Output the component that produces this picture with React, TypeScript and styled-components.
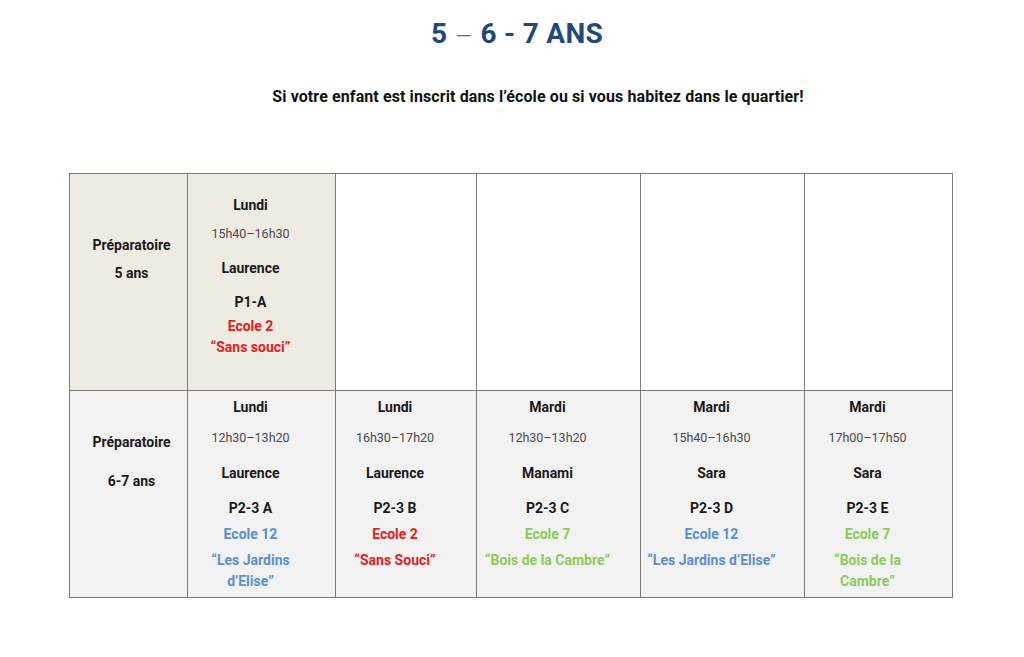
import React from "react";
import styled, { createGlobalStyle } from "styled-components";

const GlobalStyle = createGlobalStyle`
  html, body {
    margin: 0;
    padding: 0;
    background: #ffffff;
  }
  body {
    font-family: Roboto, "Noto Sans CJK JP", sans-serif;
    color: #111;
  }
`;

const Page = styled.div`
  width: 1024px;
  height: 657px;
  display: flex;
  flex-direction: column;
  align-items: center;
`;

const Title = styled.h1`
  margin: 15px 0 0 10px;
  font-size: 28px;
  line-height: 38px;
  font-weight: 700;
  color: #23497a;
  letter-spacing: 0.3px;
`;

const Dash = styled.span`
  font-weight: 300;
  color: #4a6a95;
  vertical-align: -3px;
`;

const Subtitle = styled.p`
  margin: 31px 0 0 52px;
  font-size: 16px;
  line-height: 20px;
  font-weight: 700;
  color: #111;
  letter-spacing: 0.1px;
`;

const Grid = styled.div`
  margin: 66px 0 0 -2px;
  display: grid;
  grid-template-columns: 118px 148px 141px 164px 164px 147px;
  grid-template-rows: 217px 206px;
  border: 1px solid #7a7a7a;
  box-sizing: content-box;
  width: 882px;
`;

const Cell = styled.div<{ $bg: string; $pad: number; $last?: boolean; $bottom?: boolean; $lead?: boolean }>`
  background: ${(p) => p.$bg};
  border-right: ${(p) => (p.$last ? "none" : "1px solid #7a7a7a")};
  border-bottom: ${(p) => (p.$bottom ? "none" : "1px solid #7a7a7a")};
  padding: ${(p) => (p.$lead ? `${p.$pad}px 0 0 6px` : `${p.$pad}px 22px 0 0`)};
  display: flex;
  flex-direction: column;
  align-items: center;
  text-align: center;
  font-size: 14px;
  font-weight: 700;
  color: #1a1a1a;
`;

const Line = styled.div<{ $top: number; $color?: string; $light?: boolean }>`
  margin-top: ${(p) => p.$top}px;
  line-height: 20px;
  white-space: nowrap;
  color: ${(p) => (p.$light ? "#4a4a4a" : p.$color || "#1a1a1a")};
  font-weight: ${(p) => (p.$light ? 400 : 700)};
  font-size: ${(p) => (p.$light ? "12.5px" : "14px")};
`;

const RED = "#e51d23";
const BLUE = "#5b8fd3";
const GREEN = "#8ccb5a";

type Course = {
  day: string;
  time: string;
  teacher: string;
  group: string;
  school: string;
  place: string[];
  color: string;
};

const courses: Course[] = [
  { day: "Lundi", time: "12h30–13h20", teacher: "Laurence", group: "P2-3 A", school: "Ecole 12", place: ["“Les Jardins", "d’Elise”"], color: BLUE },
  { day: "Lundi", time: "16h30–17h20", teacher: "Laurence", group: "P2-3 B", school: "Ecole 2", place: ["“Sans Souci”"], color: RED },
  { day: "Mardi", time: "12h30–13h20", teacher: "Manami", group: "P2-3 C", school: "Ecole 7", place: ["“Bois de la Cambre”"], color: GREEN },
  { day: "Mardi", time: "15h40–16h30", teacher: "Sara", group: "P2-3 D", school: "Ecole 12", place: ["“Les Jardins d’Elise”"], color: BLUE },
  { day: "Mardi", time: "17h00–17h50", teacher: "Sara", group: "P2-3 E", school: "Ecole 7", place: ["“Bois de la", "Cambre”"], color: GREEN },
];

const BEIGE = "#eeebe2";
const GRAY = "#f2f2f2";

export default function App() {
  return (
    <Page>
      <GlobalStyle />
      <Title>
        5 <Dash>–</Dash> 6 - 7 ANS
      </Title>
      <Subtitle>Si votre enfant est inscrit dans l’école ou si vous habitez dans le quartier!</Subtitle>
      <Grid>
        <Cell $bg={BEIGE} $pad={61} $lead>
          <Line $top={0}>Préparatoire</Line>
          <Line $top={8}>5 ans</Line>
        </Cell>
        <Cell $bg={BEIGE} $pad={21}>
          <Line $top={0}>Lundi</Line>
          <Line $top={9} $light>15h40–16h30</Line>
          <Line $top={14}>Laurence</Line>
          <Line $top={14}>P1-A</Line>
          <Line $top={4} $color={RED}>Ecole 2</Line>
          <Line $top={1} $color={RED}>“Sans souci”</Line>
        </Cell>
        <Cell $bg="#fff" $pad={0} />
        <Cell $bg="#fff" $pad={0} />
        <Cell $bg="#fff" $pad={0} />
        <Cell $bg="#fff" $pad={0} $last />
        <Cell $bg={GRAY} $pad={41} $bottom $lead>
          <Line $top={0}>Préparatoire</Line>
          <Line $top={19}>6-7 ans</Line>
        </Cell>
        {courses.map((c, i) => (
          <Cell key={c.group} $bg={GRAY} $pad={6} $bottom $last={i === courses.length - 1}>
            <Line $top={0}>{c.day}</Line>
            <Line $top={11} $light>{c.time}</Line>
            <Line $top={15}>{c.teacher}</Line>
            <Line $top={15}>{c.group}</Line>
            <Line $top={6} $color={c.color}>{c.school}</Line>
            {c.place.map((p, j) => (
              <Line key={p} $top={j === 0 ? 6 : 1} $color={c.color}>
                {p}
              </Line>
            ))}
          </Cell>
        ))}
      </Grid>
    </Page>
  );
}
